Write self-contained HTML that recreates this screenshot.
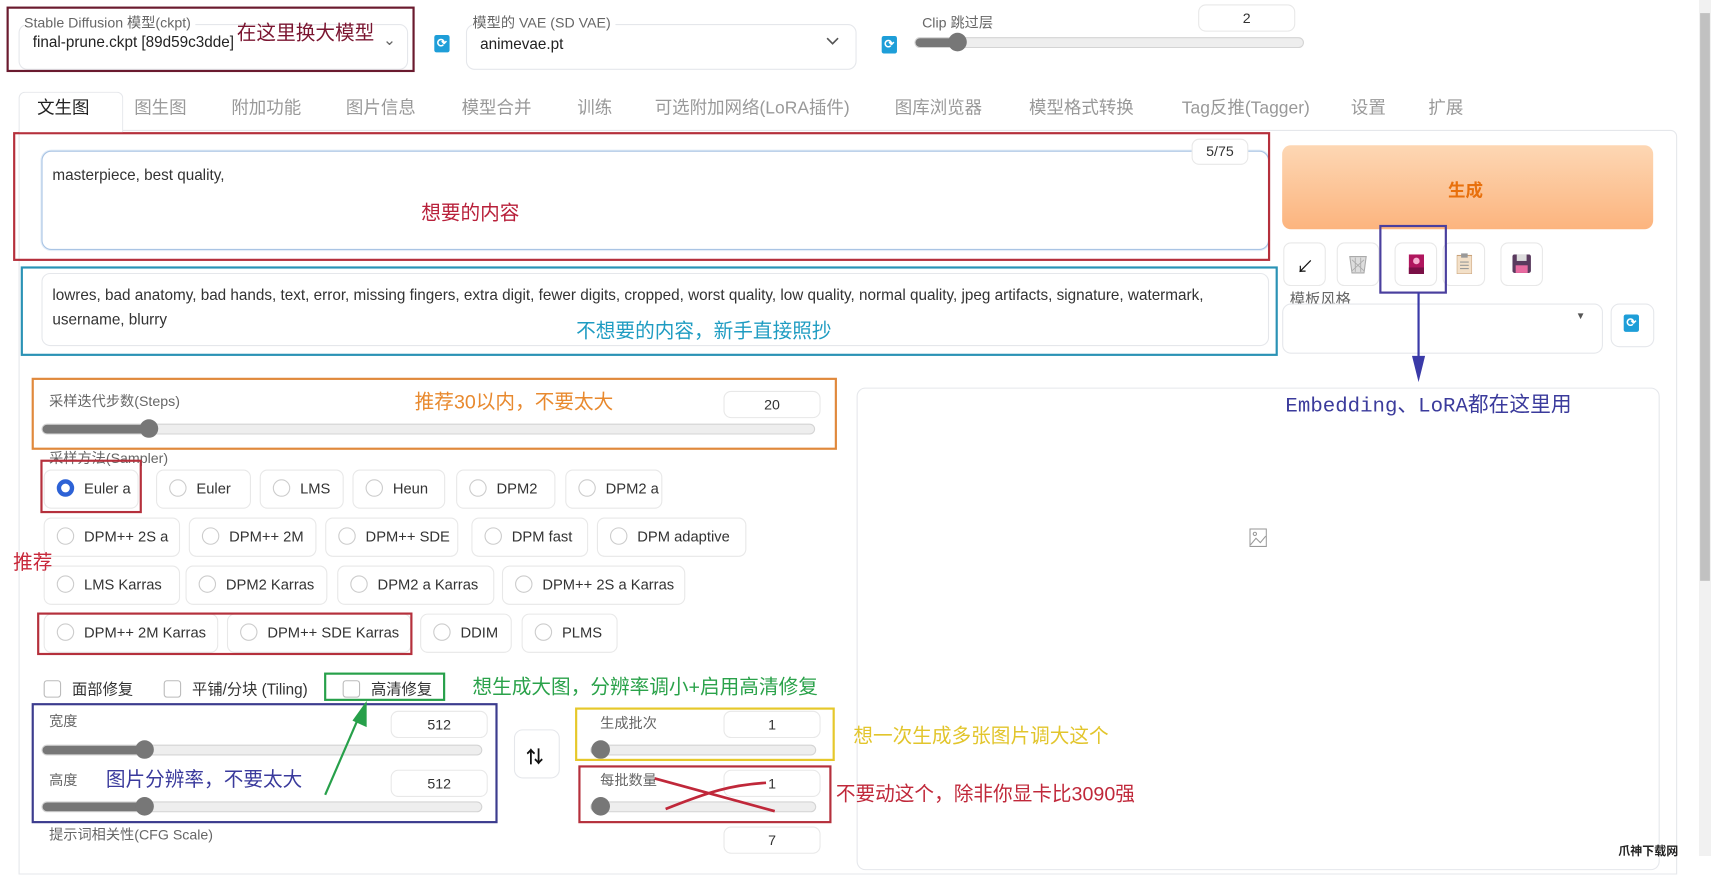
<!DOCTYPE html>
<html><head><meta charset="utf-8">
<style>
html,body{margin:0;padding:0;width:1711px;height:856px;overflow:hidden;background:#fff}
#w{position:absolute;left:0;top:0;width:1568px;height:784px;transform:scale(1.0912,1.0918);transform-origin:0 0;font-family:"Liberation Sans","Noto Sans CJK SC",sans-serif;color:#333}
.a{position:absolute}
.t{position:absolute;white-space:nowrap}
.lbl{font-size:13px;color:#666}
.box{position:absolute;border:1px solid #e5e7eb;border-radius:8px;background:#fff}
.num{position:absolute;border:1px solid #e8e8e8;border-radius:7px;background:#fff;font-size:13px;text-align:center;line-height:23px;height:23px;width:87px;color:#333}
.sl{position:absolute;height:8px;border:1px solid #d4d4d4;border-radius:5px;background:#eee}
.sl i{position:absolute;left:0;top:0;height:8px;background:#777;border-radius:5px}
.sl b{position:absolute;top:-5px;width:17px;height:17px;border-radius:50%;background:#777}
.rd{position:absolute;height:34px;border:1px solid #e8e8e8;border-radius:7px;background:#fff;font-size:13.5px;line-height:34px;color:#333;white-space:nowrap}
.rd s{display:inline-block;width:14px;height:14px;border:1px solid #ccc;border-radius:50%;vertical-align:-3px;margin:0 9px 0 11px;text-decoration:none}
.ann{position:absolute;white-space:nowrap;font-size:18px}
.rect{position:absolute;border:3px solid}
.ref{position:absolute;width:14px;height:16px;background:#1e9ed8;border-radius:2px;color:#fff;font-size:11px;text-align:center;line-height:16px;font-weight:bold}
.tab{position:absolute;top:85px;font-size:16px;color:#999;white-space:nowrap}
.ib{position:absolute;top:222px;width:37px;height:38px;border:1px solid #e8e8e8;border-radius:7px;background:#fff}
.cb{display:inline-block;width:14px;height:14px;border:1px solid #bbb;border-radius:3px;vertical-align:-3px;margin-right:10px}
</style></head><body><div id="w">

<div class="box" style="left:17px;top:22px;width:355px;height:40px"></div>
<div class="t lbl" style="left:22px;top:10px;background:#fff;padding-right:4px">Stable Diffusion 模型(ckpt)</div>
<div class="t" style="left:30px;top:30px;font-size:14px;color:#222">final-prune.ckpt [89d59c3dde]</div>
<div class="t" style="left:351px;top:28px;font-size:14px;color:#666">⌄</div>
<div class="rect" style="left:6px;top:6px;width:370px;height:56px;border-color:#6a1a2e;border-width:2px"></div>
<div class="ann" style="left:217px;top:16px;color:#7a1530">在这里换大模型</div>
<div class="ref" style="left:398px;top:32px">⟳</div>

<div class="box" style="left:427px;top:22px;width:356px;height:40px"></div>
<div class="t lbl" style="left:433px;top:10px;background:#fff;padding-right:4px">模型的 VAE (SD VAE)</div>
<div class="t" style="left:440px;top:32px;font-size:14px;color:#222">animevae.pt</div>
<svg class="a" style="left:757px;top:34px" width="12" height="8"><path d="M1 1l5 5 5-5" fill="none" stroke="#555" stroke-width="1.5"/></svg>
<div class="ref" style="left:808px;top:33px">⟳</div>

<div class="t lbl" style="left:845px;top:10px">Clip 跳过层</div>
<div class="num" style="left:1098px;top:4px">2</div>
<div class="sl" style="left:838px;top:34px;width:355px"><i style="width:40px"></i><b style="left:30px"></b></div>

<div class="a" style="left:17px;top:84px;width:94px;height:36px;border:1px solid #e5e7eb;border-bottom:none;border-radius:6px 6px 0 0;background:#fff;z-index:2"></div>
<div class="tab" style="left:34px;color:#222;z-index:3">文生图</div>
<div class="tab" style="left:123px">图生图</div>
<div class="tab" style="left:212px">附加功能</div>
<div class="tab" style="left:317px">图片信息</div>
<div class="tab" style="left:423px">模型合并</div>
<div class="tab" style="left:529px">训练</div>
<div class="tab" style="left:600px">可选附加网络(LoRA插件)</div>
<div class="tab" style="left:820px">图库浏览器</div>
<div class="tab" style="left:943px">模型格式转换</div>
<div class="tab" style="left:1083px">Tag反推(Tagger)</div>
<div class="tab" style="left:1238px">设置</div>
<div class="tab" style="left:1309px">扩展</div>
<div class="a" style="left:17px;top:119px;width:1518px;height:680px;border:1px solid #e5e7eb;border-radius:0 6px 0 0"></div>

<div class="a" style="left:38px;top:138px;width:1123px;height:89px;border:1px solid #a9c4e4;border-radius:9px;background:#fff;box-shadow:0 0 0 1px #e3edf8"></div>
<div class="t" style="left:48px;top:152px;font-size:14px;color:#333">masterpiece, best quality,</div>
<div class="num" style="left:1092px;top:127px;width:50px;height:22px;line-height:22px">5/75</div>
<div class="rect" style="left:12px;top:121px;width:1148px;height:114px;border-color:#b5303c;border-width:2.5px"></div>
<div class="ann" style="left:386px;top:181px;color:#b8203a">想要的内容</div>

<div class="box" style="left:38px;top:250px;width:1123px;height:65px"></div>
<div class="t" style="left:48px;top:262px;font-size:14px;color:#333">lowres, bad anatomy, bad hands, text, error, missing fingers, extra digit, fewer digits, cropped, worst quality, low quality, normal quality, jpeg artifacts, signature, watermark,</div>
<div class="t" style="left:48px;top:284px;font-size:14px;color:#333">username, blurry</div>
<div class="rect" style="left:19px;top:244px;width:1148px;height:78px;border-color:#2a92b5;border-width:2.5px"></div>
<div class="ann" style="left:528px;top:289px;color:#1f9cc2">不想要的内容，新手直接照抄</div>

<div class="a" style="left:1175px;top:133px;width:340px;height:77px;border-radius:8px;background:linear-gradient(180deg,#fdd7b4,#fcb47e)"></div>
<div class="t" style="left:1327px;top:161px;font-size:16px;font-weight:bold;color:#e8700c">生成</div>
<div class="ib" style="left:1176px"><div class="t" style="left:11px;top:8px;font-size:16px;color:#111">↙</div></div>
<div class="ib" style="left:1225px"><svg class="a" style="left:10px;top:10px" width="17" height="18"><path d="M1 2h15l-2 15H3z" fill="#ddd" stroke="#aaa"/><path d="M3 5l11 10M14 5L3 15M6 3v13M11 3v13" stroke="#aaa" stroke-width=".8"/></svg></div>
<div class="ib" style="left:1278px"><svg class="a" style="left:12px;top:10px" width="14" height="18"><rect width="14" height="18" fill="#b0165e"/><rect y="12" width="14" height="6" fill="#7a1046"/><circle cx="7" cy="6" r="3" fill="#f6b0d0"/></svg></div>
<div class="ib" style="left:1322px"><svg class="a" style="left:12px;top:9px" width="14" height="19"><rect y="2" width="14" height="17" fill="#f3e0c8" stroke="#c9a27a"/><rect x="4" width="6" height="4" fill="#999"/><path d="M3 8h8M3 11h8M3 14h8" stroke="#999"/></svg></div>
<div class="ib" style="left:1375px"><svg class="a" style="left:10px;top:10px" width="17" height="17"><rect width="17" height="17" rx="2" fill="#5a3a5e"/><rect x="4" width="9" height="6" fill="#ddd"/><rect x="3" y="10" width="11" height="7" fill="#e86aa0"/></svg></div>
<div class="rect" style="left:1264px;top:206px;width:58px;height:59px;border-color:#4a3f9e;border-width:2.5px"></div>
<div class="t lbl" style="left:1182px;top:264px;font-size:14px">模板风格</div>
<div class="box" style="left:1175px;top:278px;width:292px;height:44px"></div>
<div class="t" style="left:1444px;top:284px;font-size:9px;color:#555">▼</div>
<div class="box" style="left:1476px;top:278px;width:38px;height:38px"></div>
<div class="ref" style="left:1488px;top:288px">⟳</div>
<svg class="a" style="left:1290px;top:268px" width="20" height="84"><path d="M10 0V62" stroke="#3a3aa8" stroke-width="2"/><path d="M4 58L10 82L16 58Z" fill="#3a3aa8"/></svg>
<div class="ann" style="left:1178px;top:356px;font-size:19px;color:#3b3b9c;font-family:'Liberation Mono','Noto Sans CJK SC',monospace">Embedding、LoRA都在这里用</div>

<div class="a" style="left:785px;top:355px;width:734px;height:440px;border:1px solid #e5e7eb;border-radius:8px"></div>
<svg class="a" style="left:1145px;top:484px" width="16" height="17"><rect x=".5" y=".5" width="15" height="16" fill="none" stroke="#999"/><circle cx="5" cy="5" r="1.5" fill="none" stroke="#999"/><path d="M1 15l5-6 4 4 5-6" fill="none" stroke="#999"/></svg>

<div class="t lbl" style="left:45px;top:357px">采样迭代步数(Steps)</div>
<div class="num" style="left:663px;top:358px">20</div>
<div class="sl" style="left:38px;top:388px;width:707px"><i style="width:100px"></i><b style="left:89px"></b></div>
<div class="rect" style="left:29px;top:346px;width:734px;height:62px;border-color:#e0893c;border-width:2.5px"></div>
<div class="ann" style="left:380px;top:354px;color:#e8892e">推荐30以内，不要太大</div>

<div class="t lbl" style="left:45px;top:409px">采样方法(Sampler)</div>
<div class="rd" style="left:40px;top:430px;width:85px"><s style="border:4px solid #2d62d6;width:8px;height:8px"></s>Euler a</div>
<div class="rd" style="left:143px;top:430px;width:85px"><s></s>Euler</div>
<div class="rd" style="left:238px;top:430px;width:75px"><s></s>LMS</div>
<div class="rd" style="left:323px;top:430px;width:83px"><s></s>Heun</div>
<div class="rd" style="left:418px;top:430px;width:89px"><s></s>DPM2</div>
<div class="rd" style="left:518px;top:430px;width:87px"><s></s>DPM2 a</div>
<div class="rect" style="left:37px;top:421px;width:89px;height:45px;border-color:#b5303c;border-width:2.5px"></div>

<div class="rd" style="left:40px;top:474px;width:123px"><s></s>DPM++ 2S a</div>
<div class="rd" style="left:173px;top:474px;width:115px"><s></s>DPM++ 2M</div>
<div class="rd" style="left:298px;top:474px;width:120px"><s></s>DPM++ SDE</div>
<div class="rd" style="left:432px;top:474px;width:105px"><s></s>DPM fast</div>
<div class="rd" style="left:547px;top:474px;width:135px"><s></s>DPM adaptive</div>

<div class="rd" style="left:40px;top:518px;width:123px"><s></s>LMS Karras</div>
<div class="rd" style="left:170px;top:518px;width:128px"><s></s>DPM2 Karras</div>
<div class="rd" style="left:309px;top:518px;width:142px"><s></s>DPM2 a Karras</div>
<div class="rd" style="left:460px;top:518px;width:166px"><s></s>DPM++ 2S a Karras</div>

<div class="rd" style="left:40px;top:562px;width:158px"><s></s>DPM++ 2M Karras</div>
<div class="rd" style="left:208px;top:562px;width:167px"><s></s>DPM++ SDE Karras</div>
<div class="rd" style="left:385px;top:562px;width:82px"><s></s>DDIM</div>
<div class="rd" style="left:478px;top:562px;width:86px"><s></s>PLMS</div>
<div class="rect" style="left:34px;top:561px;width:340px;height:35px;border-color:#b5303c;border-width:2.5px"></div>
<div class="ann" style="left:12px;top:501px;color:#c8283a">推荐</div>

<div class="t" style="left:40px;top:621px;font-size:14px;color:#333"><span class="cb"></span>面部修复</div>
<div class="t" style="left:150px;top:621px;font-size:14px;color:#333"><span class="cb"></span>平铺/分块 (Tiling)</div>
<div class="t" style="left:314px;top:621px;font-size:14px;color:#333"><span class="cb"></span>高清修复</div>
<div class="rect" style="left:297px;top:616px;width:107px;height:22px;border-color:#27a04a;border-width:2.5px"></div>
<div class="ann" style="left:433px;top:615px;color:#2aa24a">想生成大图，分辨率调小+启用高清修复</div>

<div class="t lbl" style="left:45px;top:650px">宽度</div>
<div class="num" style="left:358px;top:651px">512</div>
<div class="sl" style="left:38px;top:682px;width:402px"><i style="width:95px"></i><b style="left:85px"></b></div>
<div class="t lbl" style="left:45px;top:704px">高度</div>
<div class="num" style="left:358px;top:705px">512</div>
<div class="sl" style="left:38px;top:734px;width:402px"><i style="width:95px"></i><b style="left:85px"></b></div>
<div class="rect" style="left:29px;top:644px;width:423px;height:106px;border-color:#3c3c8e;border-width:2.5px"></div>
<div class="ann" style="left:97px;top:700px;color:#3a3a9c">图片分辨率，不要太大</div>
<svg class="a" style="left:290px;top:640px" width="60" height="90"><path d="M8 88L40 14" stroke="#27a04a" stroke-width="2"/><path d="M33 20L46 2L46 26Z" fill="#27a04a"/></svg>

<div class="box" style="left:471px;top:668px;width:40px;height:43px"></div>
<div class="t" style="left:482px;top:680px;font-size:16px;font-weight:bold;color:#111">⇅</div>

<div class="t lbl" style="left:550px;top:652px">生成批次</div>
<div class="num" style="left:663px;top:651px">1</div>
<div class="sl" style="left:541px;top:682px;width:205px"><i style="width:6px"></i><b style="left:0px"></b></div>
<div class="rect" style="left:527px;top:648px;width:234px;height:45px;border-color:#e6c82a;border-width:2.5px"></div>
<div class="ann" style="left:782px;top:660px;color:#e2c52c">想一次生成多张图片调大这个</div>

<div class="t lbl" style="left:550px;top:704px">每批数量</div>
<div class="num" style="left:663px;top:705px">1</div>
<div class="sl" style="left:541px;top:734px;width:205px"><i style="width:6px"></i><b style="left:0px"></b></div>
<div class="rect" style="left:530px;top:701px;width:228px;height:49px;border-color:#b5303c;border-width:2.5px"></div>
<svg class="a" style="left:590px;top:705px" width="130" height="40"><path d="M10 8L120 38M20 36C60 20 80 14 112 12" stroke="#c0283a" stroke-width="2.5" fill="none"/></svg>
<div class="ann" style="left:766px;top:713px;color:#c0283a">不要动这个，除非你显卡比3090强</div>

<div class="t lbl" style="left:45px;top:754px">提示词相关性(CFG Scale)</div>
<div class="num" style="left:663px;top:757px">7</div>

<div class="a" style="left:1557px;top:0;width:11px;height:784px;background:#f1f1f1"></div>
<div class="a" style="left:1558px;top:12px;width:9px;height:520px;background:#c1c1c1"></div>
<div class="t" style="left:1483px;top:771px;font-size:11px;color:#222;font-weight:bold">爪神下载网</div>
</div></body></html>
